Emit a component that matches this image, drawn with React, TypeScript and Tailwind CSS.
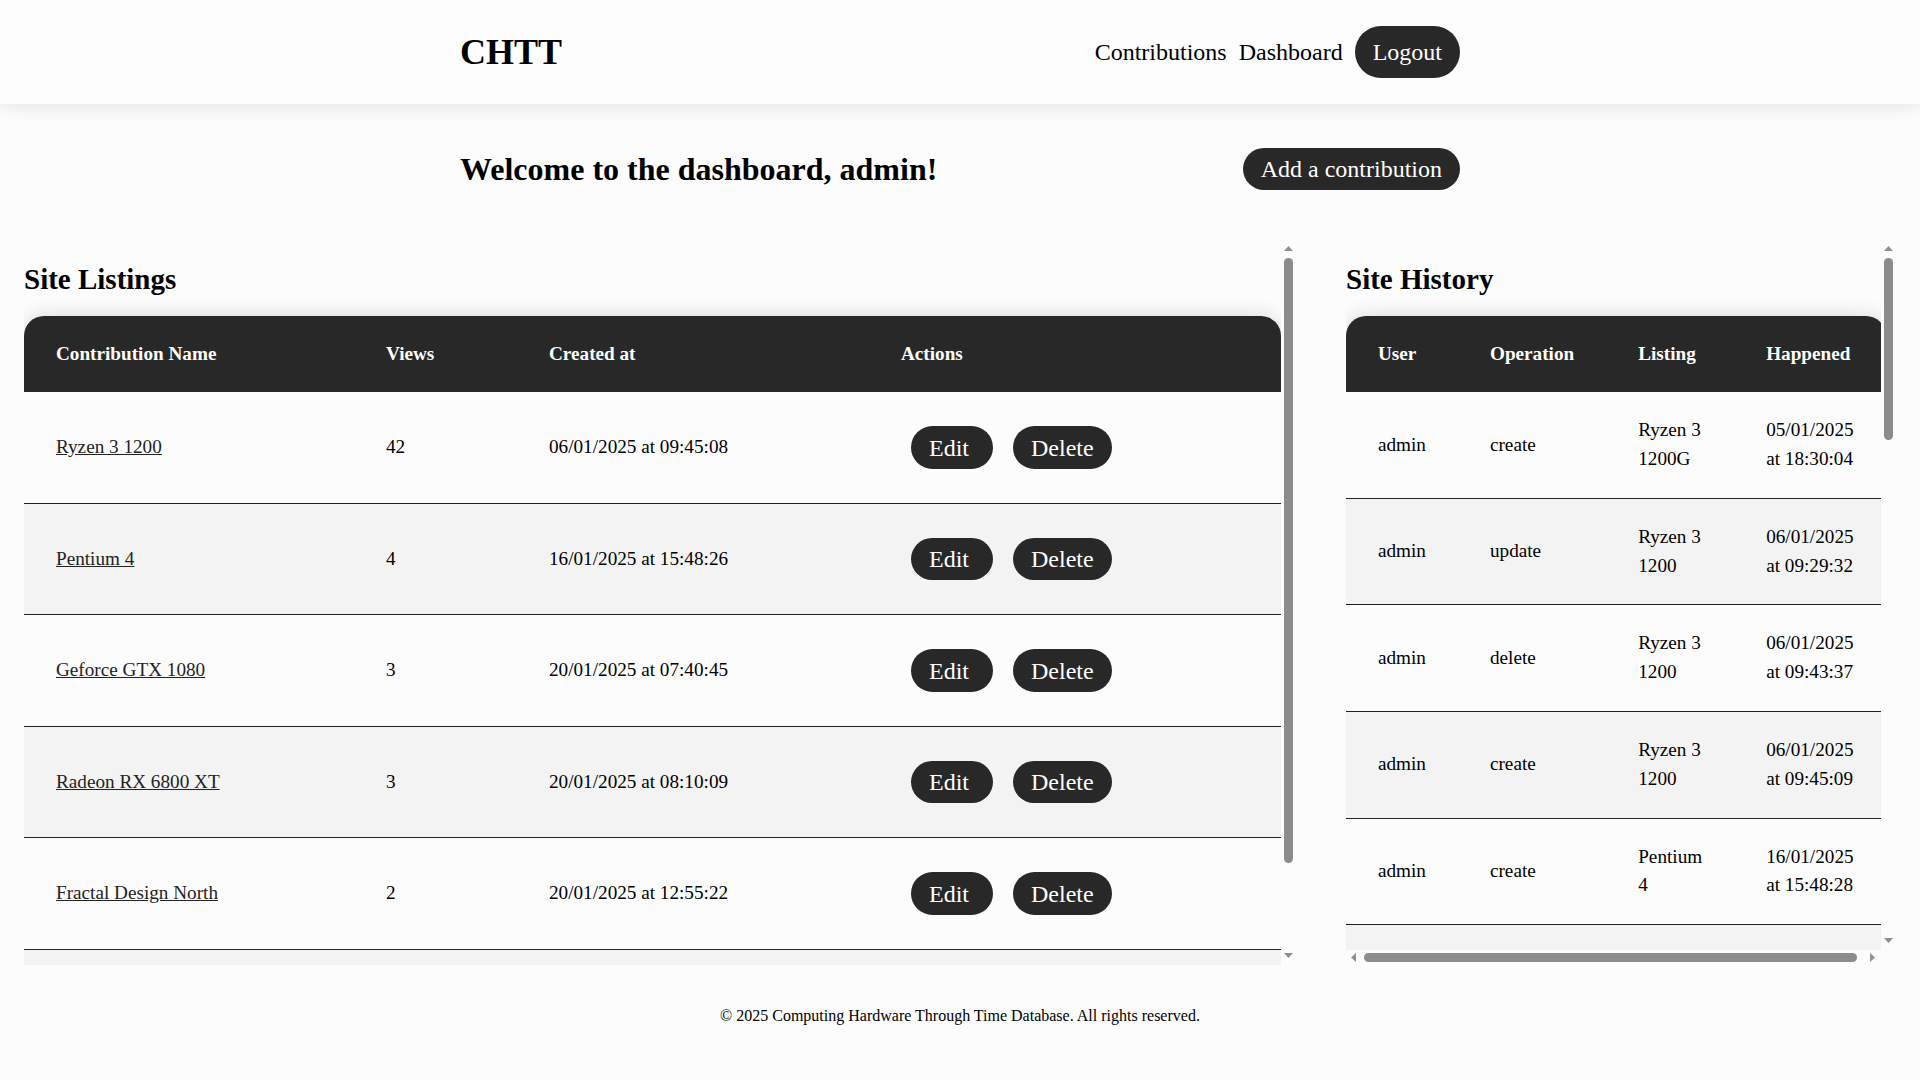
const listings = [
  { name: 'Ryzen 3 1200', views: 42, created: '06/01/2025 at 09:45:08' },
  { name: 'Pentium 4', views: 4, created: '16/01/2025 at 15:48:26' },
  { name: 'Geforce GTX 1080', views: 3, created: '20/01/2025 at 07:40:45' },
  { name: 'Radeon RX 6800 XT', views: 3, created: '20/01/2025 at 08:10:09' },
  { name: 'Fractal Design North', views: 2, created: '20/01/2025 at 12:55:22' },
  { name: 'Core i7 920', views: 1, created: '21/01/2025 at 10:02:17' },
]

const history = [
  ['admin', 'create', 'Ryzen 3 1200G', '05/01/2025 at 18:30:04'],
  ['admin', 'update', 'Ryzen 3 1200', '06/01/2025 at 09:29:32'],
  ['admin', 'delete', 'Ryzen 3 1200', '06/01/2025 at 09:43:37'],
  ['admin', 'create', 'Ryzen 3 1200', '06/01/2025 at 09:45:09'],
  ['admin', 'create', 'Pentium 4', '16/01/2025 at 15:48:28'],
  ['admin', 'update', 'Pentium 4', '16/01/2025 at 15:52:10'],
  ['admin', 'create', 'Geforce GTX 1080', '20/01/2025 at 07:40:46'],
  ['admin', 'update', 'Geforce GTX 1080', '20/01/2025 at 07:44:03'],
  ['admin', 'create', 'Radeon RX 6800 XT', '20/01/2025 at 08:10:10'],
  ['admin', 'update', 'Radeon RX 6800 XT', '20/01/2025 at 08:15:41'],
  ['admin', 'create', 'Fractal Design North', '20/01/2025 at 12:55:23'],
  ['admin', 'update', 'Fractal Design North', '20/01/2025 at 13:01:58'],
]

// little gray triangles used by the fake scrollbars
function Arrow({ dir }: { dir: 'up' | 'down' | 'left' | 'right' }) {
  const pts = {
    up: '0,5 4.5,0 9,5',
    down: '0,0 4.5,5 9,0',
    left: '5,0 0,4.5 5,9',
    right: '0,0 5,4.5 0,9',
  }[dir]
  const vertical = dir === 'up' || dir === 'down'
  return (
    <svg width={vertical ? 9 : 5} height={vertical ? 5 : 9} viewBox={vertical ? '0 0 9 5' : '0 0 5 9'} className="block">
      <polygon points={pts} fill="#8f8f8f" />
    </svg>
  )
}

function VScrollbar({ thumb }: { thumb: number }) {
  return (
    <div className="flex w-[15px] shrink-0 flex-col items-center">
      <div className="h-[13px] pt-[1px]">
        <Arrow dir="up" />
      </div>
      <div className="w-[9px] rounded-full bg-[#8c8c8c]" style={{ height: thumb }} />
      <div className="flex-1" />
      <div className="h-[13px] pt-[1px]">
        <Arrow dir="down" />
      </div>
    </div>
  )
}

export default function App() {
  return (
    <div className="min-h-screen bg-[#fcfcfc] font-['Liberation_Serif',serif] text-black">
      {/* Header */}
      <header className="relative z-10 h-[104px] bg-[#fdfdfd] shadow-[0_0_20px_rgba(0,0,0,0.12)]">
        <div className="mx-auto flex h-full max-w-[1000px] items-center justify-between">
          <h1 className="text-[36px] font-bold leading-none">CHTT</h1>
          <nav className="flex items-center gap-[12px] text-[24px]">
            <a href="#">Contributions</a>
            <a href="#">Dashboard</a>
            <button className="rounded-full bg-[#282828] px-[18px] py-[8px] text-white">Logout</button>
          </nav>
        </div>
      </header>

      {/* Welcome */}
      <section className="mx-auto flex max-w-[1000px] items-center justify-between pt-[41px] pb-[52px]">
        <h2 className="text-[32px] font-bold leading-[1.5]">Welcome to the dashboard, admin!</h2>
        <button className="rounded-full bg-[#282828] px-[18px] py-[3px] text-[24px] text-white">
          Add a contribution
        </button>
      </section>

      {/* Panels */}
      <div className="flex gap-[50px] px-6">
        {/* Listings */}
        <div className="flex h-[720px] flex-1">
          <div className="min-w-0 flex-1 overflow-hidden">
            <h2 className="mt-[13px] mb-[14px] text-[29px] font-bold leading-[1.5]">Site Listings</h2>
            <table className="w-full border-separate border-spacing-0 rounded-t-[20px] text-[19.2px] shadow-[0_0_20px_rgba(0,0,0,0.15)]">
              <thead>
                <tr>
                  <th className="w-[330px] rounded-tl-[20px] bg-[#282828] px-8 py-6 text-left font-bold text-white">Contribution Name</th>
                  <th className="w-[163px] bg-[#282828] px-8 py-6 text-left font-bold text-white">Views</th>
                  <th className="w-[352px] bg-[#282828] px-8 py-6 text-left font-bold text-white">Created at</th>
                  <th className="rounded-tr-[20px] bg-[#282828] px-8 py-6 text-left font-bold text-white">Actions</th>
                </tr>
              </thead>
              <tbody>
                {listings.map((l, i) => (
                  <tr key={l.name} className={i % 2 === 1 ? 'bg-[#f3f3f3]' : 'bg-[#fcfcfc]'}>
                    <td className="border-b border-[#222] px-8 py-6">
                      <a href="#" className="text-[#222] underline">{l.name}</a>
                    </td>
                    <td className="border-b border-[#222] px-8 py-6">{l.views}</td>
                    <td className="border-b border-[#222] px-8 py-6">{l.created}</td>
                    <td className="border-b border-[#222] px-8 py-6">
                      <div className="flex">
                        <button className="m-[10px] rounded-full bg-[#282828] pl-[18px] pr-[24px] py-[3.25px] text-[24px] text-white">Edit</button>
                        <button className="m-[10px] rounded-full bg-[#282828] px-[18px] py-[3.25px] text-[24px] text-white">Delete</button>
                      </div>
                    </td>
                  </tr>
                ))}
              </tbody>
            </table>
          </div>
          <VScrollbar thumb={605} />
        </div>

        {/* History */}
        <div className="flex h-[720px] w-[550px] flex-col">
          <div className="flex min-h-0 flex-1">
            <div className="min-w-0 flex-1 overflow-hidden">
              <h2 className="mt-[13px] mb-[14px] text-[29px] font-bold leading-[1.5]">Site History</h2>
              <table className="w-full border-separate border-spacing-0 rounded-t-[20px] text-[19.2px] shadow-[0_0_20px_rgba(0,0,0,0.15)]">
                <thead>
                  <tr>
                    <th className="rounded-tl-[20px] bg-[#282828] px-8 py-6 text-left font-bold text-white">User</th>
                    <th className="bg-[#282828] px-8 py-6 text-left font-bold text-white">Operation</th>
                    <th className="bg-[#282828] px-8 py-6 text-left font-bold text-white">Listing</th>
                    <th className="rounded-tr-[20px] bg-[#282828] px-8 py-6 text-left font-bold text-white">Happened</th>
                  </tr>
                </thead>
                <tbody>
                  {history.map((h, i) => (
                    <tr key={i} className={i % 2 === 1 ? 'bg-[#f3f3f3]' : 'bg-[#fcfcfc]'}>
                      <td className="border-b border-[#222] px-8 py-6">{h[0]}</td>
                      <td className="border-b border-[#222] px-8 py-6">{h[1]}</td>
                      <td className="border-b border-[#222] px-8 py-6">{h[2]}</td>
                      <td className="border-b border-[#222] px-8 py-6">{h[3]}</td>
                    </tr>
                  ))}
                </tbody>
              </table>
            </div>
            <VScrollbar thumb={182} />
          </div>
          {/* horizontal scrollbar */}
          <div className="flex h-[15px] items-center">
            <div className="flex w-[18px] justify-start pl-[5px]">
              <Arrow dir="left" />
            </div>
            <div className="h-[9px] w-[493px] rounded-full bg-[#8c8c8c]" />
            <div className="flex w-[24px] justify-start pl-[13px]">
              <Arrow dir="right" />
            </div>
            <div className="w-[15px]" />
          </div>
        </div>
      </div>

      {/* Footer */}
      <footer className="pt-[39px] text-center text-[16px]">
        © 2025 Computing Hardware Through Time Database. All rights reserved.
      </footer>
    </div>
  )
}
